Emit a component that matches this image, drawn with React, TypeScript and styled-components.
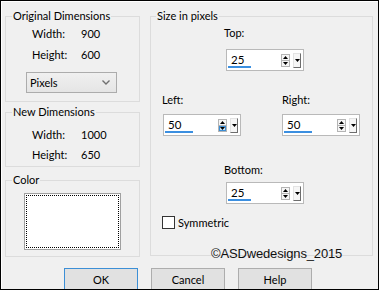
import React from "react";
import styled, { createGlobalStyle } from "styled-components";

const Global = createGlobalStyle`
  html, body { margin: 0; padding: 0; background: #f0f0f0; }
  * { box-sizing: border-box; }
`;

const FONT = `Lato, "Noto Sans", sans-serif`;

const Window = styled.div`
  position: relative;
  width: 379px;
  height: 290px;
  border: 1px solid #000;
  box-shadow: inset 1px 1px 0 #fff;
  background: #f0f0f0;
  overflow: hidden;
  padding: 8px 5px 0 4px;
  display: flex;
  flex-direction: column;
  font-family: ${FONT};
  font-size: 11px;
  color: #000;
`;

const Main = styled.div`
  display: flex;
  gap: 10px;
`;

const Column = styled.div`
  display: flex;
  flex-direction: column;
  width: 135px;
`;

const Group = styled.fieldset<{ $h: number; $mt?: number; $w?: number }>`
  margin: ${(p) => p.$mt ?? 0}px 0 0 0;
  padding: 0;
  width: ${(p) => p.$w ?? 135}px;
  height: ${(p) => p.$h}px;
  border: 1px solid #dcdcdc;
  min-width: 0;
  display: flex;
  flex-direction: column;
`;

const Legend = styled.legend<{ $ml?: number }>`
  margin-left: ${(p) => p.$ml ?? 6}px;
  padding: 0 1px;
  line-height: 14px;
`;

const InfoRows = styled.div<{ $pt: number; $rh: number }>`
  padding: ${(p) => p.$pt}px 0 0 26px;
  display: flex;
  flex-direction: column;
  & > div { height: ${(p) => p.$rh}px; }
`;

const InfoRow = styled.div`
  display: flex;
  align-items: center;
`;

const InfoLabel = styled.span`
  width: 49px;
`;

const Select = styled.div`
  margin: 7px 0 0 20px;
  width: 91px;
  height: 21px;
  border: 1px solid #acacac;
  background: linear-gradient(#f0f0f0, #e5e5e5);
  display: flex;
  align-items: center;
  justify-content: space-between;
  padding: 0 6px 0 3px;
`;

const Swatch = styled.div`
  margin: 6px 0 0 18px;
  width: 97px;
  height: 57px;
  border: 1px solid #a0a0a0;
  background: #fff;
  padding: 1px;
  & > div {
    width: 100%;
    height: 100%;
    border: 1px dotted #000;
  }
`;

const SizeBody = styled.div`
  padding: 3px 0 0 11px;
  display: flex;
  flex-direction: column;
`;

const Field = styled.div<{ $ml?: number }>`
  margin-left: ${(p) => p.$ml ?? 0}px;
  display: flex;
  flex-direction: column;
  width: 80px;
`;

const FieldLabel = styled.div<{ $gap: number; $mt?: number }>`
  line-height: 14px;
  margin-top: ${(p) => p.$mt ?? 0}px;
  margin-bottom: ${(p) => p.$gap}px;
`;

const SideRow = styled.div`
  display: flex;
  margin-top: 22px;
  & > div:first-child { width: 120px; }
`;

const SpinBox = styled.div<{ $ml?: number }>`
  margin-left: ${(p) => p.$ml ?? 0}px;
  width: 78px;
  height: 22px;
  border: 1px solid #b9b9b9;
  background: #fff;
  display: flex;
  align-items: center;
  padding: 0 2px 0 1px;
`;

const ValueArea = styled.div`
  flex: 1;
  align-self: stretch;
  display: flex;
  flex-direction: column;
  padding: 3px 0 2px 0;
`;

const ValueText = styled.span`
  padding-left: 3px;
  line-height: 13px;
  font-size: 11.5px;
`;

const Bar = styled.div`
  margin-top: auto;
  height: 3px;
  background: #3b8fe0;
`;

const Arrows = styled.div`
  width: 9px;
  height: 13px;
  display: flex;
  flex-direction: column;
  border: 1px solid #b4b4b4;
  background: #f6f6f6;
  margin-right: 3px;
`;

const ArrowHalf = styled.div<{ $hot?: boolean; $top?: boolean }>`
  flex: 1;
  display: flex;
  align-items: center;
  justify-content: center;
  background: ${(p) => (p.$hot ? "#cde6f7" : "transparent")};
  ${(p) => (p.$hot ? "outline: 1px solid #3c8fd6; outline-offset: -1px;" : "")}
  ${(p) => (p.$top ? "border-bottom: 1px solid #b4b4b4;" : "")}
`;

const DropBtn = styled.div`
  width: 8px;
  height: 15px;
  background: #f6f6f6;
  border-top: 1px solid #e3e3e3;
  border-left: 1px solid #e3e3e3;
  border-right: 1px solid #6d6d6d;
  border-bottom: 1px solid #6d6d6d;
  display: flex;
  align-items: center;
  justify-content: center;
`;

const CheckRow = styled.label`
  display: flex;
  align-items: center;
  gap: 3px;
  margin-top: 12px;
`;

const CheckBox = styled.span`
  width: 13px;
  height: 13px;
  border: 1px solid #333;
  background: #fff;
`;

const Watermark = styled.div`
  position: absolute;
  left: 210px;
  top: 245px;
  font-family: "Liberation Sans", Arial, sans-serif;
  font-size: 13px;
  letter-spacing: -0.15px;
  line-height: 15px;
  color: #111;
`;

const ButtonRow = styled.div`
  display: flex;
  gap: 13px;
  margin: 11px 0 0 59px;
`;

const Button = styled.div<{ $primary?: boolean }>`
  width: 74px;
  height: 23px;
  border: 1px solid ${(p) => (p.$primary ? "#3c8fd6" : "#adadad")};
  background: #e1e1e1;
  display: flex;
  align-items: center;
  justify-content: center;
`;

const Tri = ({ up }: { up?: boolean }) => (
  <svg width="5" height="3" viewBox="0 0 5 3">
    <polygon points={up ? "0,3 5,3 2.5,0" : "0,0 5,0 2.5,3"} fill="#000" />
  </svg>
);

const Spin = ({ value, bar, hot, ml }: { value: string; bar: number; hot?: boolean; ml?: number }) => (
  <SpinBox $ml={ml}>
    <ValueArea>
      <ValueText>{value}</ValueText>
      <Bar style={{ width: bar }} />
    </ValueArea>
    <Arrows>
      <ArrowHalf $top>
        <Tri up />
      </ArrowHalf>
      <ArrowHalf $hot={hot}>
        <Tri />
      </ArrowHalf>
    </Arrows>
    <DropBtn>
      <Tri />
    </DropBtn>
  </SpinBox>
);

export default function App() {
  return (
    <>
      <Global />
      <Window>
        <Main>
          <Column>
            <Group $h={93}>
              <Legend>Original Dimensions</Legend>
              <InfoRows $pt={0} $rh={21}>
                <InfoRow>
                  <InfoLabel>Width:</InfoLabel>
                  <span>900</span>
                </InfoRow>
                <InfoRow>
                  <InfoLabel>Height:</InfoLabel>
                  <span>600</span>
                </InfoRow>
              </InfoRows>
              <Select>
                <span>Pixels</span>
                <svg width="8" height="5" viewBox="0 0 8 5">
                  <polyline points="0.5,0.5 4,4 7.5,0.5" fill="none" stroke="#707070" strokeWidth="1.4" />
                </svg>
              </Select>
            </Group>
            <Group $h={62} $mt={3}>
              <Legend>New Dimensions</Legend>
              <InfoRows $pt={5} $rh={20}>
                <InfoRow>
                  <InfoLabel>Width:</InfoLabel>
                  <span>1000</span>
                </InfoRow>
                <InfoRow>
                  <InfoLabel>Height:</InfoLabel>
                  <span>650</span>
                </InfoRow>
              </InfoRows>
            </Group>
            <Group $h={84} $mt={6}>
              <Legend>Color</Legend>
              <Swatch>
                <div />
              </Swatch>
            </Group>
          </Column>
          <Group $h={247} $w={224}>
            <Legend $ml={5}>Size in pixels</Legend>
            <SizeBody>
              <Field $ml={62}>
                <FieldLabel $gap={9}>Top:</FieldLabel>
                <Spin value="25" bar={23} ml={2} />
              </Field>
              <SideRow>
                <Field>
                  <FieldLabel $gap={7}>Left:</FieldLabel>
                  <Spin value="50" bar={28} hot ml={1} />
                </Field>
                <Field>
                  <FieldLabel $gap={7}>Right:</FieldLabel>
                  <Spin value="50" bar={28} />
                </Field>
              </SideRow>
              <Field $ml={62}>
                <FieldLabel $gap={5} $mt={27}>Bottom:</FieldLabel>
                <Spin value="25" bar={23} ml={2} />
              </Field>
              <CheckRow>
                <CheckBox />
                <span>Symmetric</span>
              </CheckRow>
            </SizeBody>
          </Group>
        </Main>
        <ButtonRow>
          <Button $primary>OK</Button>
          <Button>Cancel</Button>
          <Button>Help</Button>
        </ButtonRow>
        <Watermark>©ASDwedesigns_2015</Watermark>
      </Window>
    </>
  );
}
